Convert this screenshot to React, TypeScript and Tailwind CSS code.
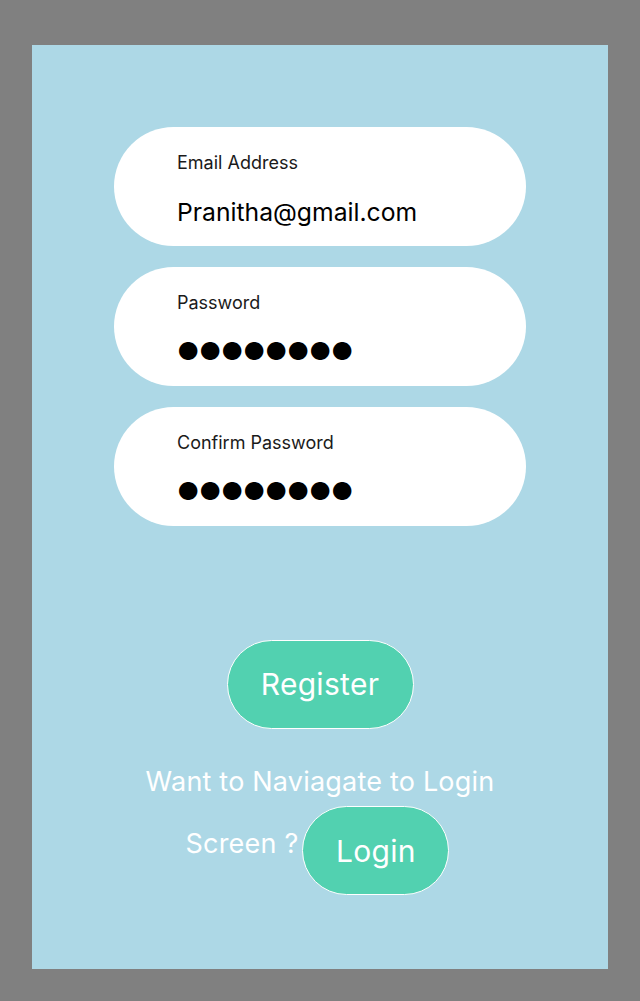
const FIELDS = [
  { label: 'Email Address', value: 'Pranitha@gmail.com', secret: false },
  { label: 'Password', value: '●●●●●●●●', secret: true },
  { label: 'Confirm Password', value: '●●●●●●●●', secret: true }
];

const Field = (props: { label: string; value: string; secret: boolean }) => {

  return (
    <div className="w-[412px] h-[119px] rounded-full bg-white pl-[63px] pt-[24px]">
      <div className="text-[18px] leading-[24px] text-[#1a1a1a]">{props.label}</div>
      <div
        className={props.secret
          ? 'mt-[21px] text-[24.5px] leading-[30px] text-black tracking-[-0.4px]'
          : 'mt-[22px] text-[24.7px] leading-[30px] text-black'}>
        {props.value}
      </div>
    </div>
  )

}

export default function App() {

  return (
    <div className="min-h-[1001px] bg-[#808080] px-[32px] pt-[45px] pb-[32px] font-['Inter','Noto_Sans',sans-serif]">
      <div className="h-[924px] bg-[#add8e6] flex flex-col items-center pt-[82px]">
        <div className="flex flex-col gap-[21px]">
          {FIELDS.map(f => (
            <Field key={f.label} {...f} />
          ))}
        </div>

        <button className="mt-[114px] w-[187px] h-[89px] rounded-full bg-[#52d1b0] border-[1.5px] border-white text-white text-[30px] tracking-[0.3px]">
          Register
        </button>

        <div className="mt-[36px] text-white text-[27px] leading-[34px] tracking-[0.2px]">
          Want to Naviagate to Login
        </div>
        <div className="flex items-center gap-[4px] mt-[7px] pr-[5px]">
          <span className="text-white text-[27px] leading-[34px] tracking-[0.2px] mb-[14px]">Screen ?</span>
          <button className="w-[147px] h-[89px] rounded-full bg-[#52d1b0] border-[1.5px] border-white text-white text-[30px] tracking-[0.3px] pt-[2px]">
            Login
          </button>
        </div>
      </div>
    </div>
  )

}
